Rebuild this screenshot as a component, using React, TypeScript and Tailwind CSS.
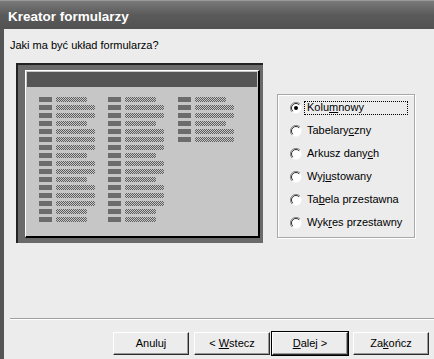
import React from "react";

const colRows = [0, 1, 1, 0, 1, 1, 1, 0, 1, 1, 0, 1, 1, 1, 0, 0];
const lastColRows = [0, 1, 1, 0, 1, 1];

const Field = ({ long }: { long: number }) => (
  <div className="flex gap-[4px] h-[5px] mb-[3px]">
    <div className="w-[13px] h-full bg-[#6c6c6c]" />
    <div
      className={`${long ? "w-[39px]" : "w-[31px]"} h-full bg-[repeating-conic-gradient(#5c5c5c_0%_25%,#c8c8c8_0%_50%)] bg-[length:2px_2px]`}
    />
  </div>
);

const Radio = ({ checked }: { checked?: boolean }) => (
  <svg width="12" height="12" viewBox="0 0 12 12" className="shrink-0">
    <circle cx="6" cy="6" r="5.5" fill="#ffffff" />
    <path d="M10 2 A5.5 5.5 0 0 0 2 10" fill="none" stroke="#8a8a8a" strokeWidth="1" />
    <path d="M9.2 2.8 A4.5 4.5 0 0 0 2.8 9.2" fill="none" stroke="#2a2a2a" strokeWidth="1" />
    {checked && <circle cx="6" cy="6" r="2" fill="#000" />}
  </svg>
);

const options: { pre: string; key: string; post: string }[] = [
  { pre: "Kolu", key: "m", post: "nowy" },
  { pre: "Tabelary", key: "c", post: "zny" },
  { pre: "Arkusz dany", key: "c", post: "h" },
  { pre: "Wyj", key: "u", post: "stowany" },
  { pre: "Ta", key: "b", post: "ela przestawna" },
  { pre: "Wyk", key: "r", post: "es przestawny" },
];

const Btn = ({ children, def }: { children: React.ReactNode; def?: boolean }) => (
  <div className={`${def ? "border border-black" : "border border-transparent"} w-[78px] h-[25px]`}>
    <div className="w-full h-full flex items-center justify-center bg-[#ececec] border-t border-l border-white border-b border-r border-b-[#2a2a2a] border-r-[#2a2a2a] shadow-[inset_-1px_-1px_#9a9a9a] text-[11px] text-black">
      {children}
    </div>
  </div>
);

export default function App() {
  return (
    <div className="w-[434px] h-[359px] overflow-hidden bg-[#ececec] flex flex-col font-['Liberation_Sans',Arial,sans-serif]">
      <div className="h-[29px] shrink-0 flex items-center pt-[4px] pl-[8px] bg-gradient-to-b from-[#7a7a7a] via-[#5a5a5a] to-[#525252] border-t border-[#9a9a9a]">
        <span className="text-white font-bold text-[13.5px]">Kreator formularzy</span>
      </div>
      <div className="flex-1 flex flex-col border-l-4 border-[#555555]">
        <div className="mt-[10px] ml-[6px] text-[11px] leading-[13px] text-black">Jaki ma być układ formularza?</div>
        <div className="flex mt-[11px]">
          {/* preview */}
          <div className="ml-[12px] w-[247px] h-[180px] bg-[#6a6a6a] border-t-2 border-l-2 border-[#222222] pl-[7px] pt-[5px] pr-[3px] pb-[5px] flex">
            <div className="flex-1 bg-[#c6c6c6] border-t border-l border-white border-b-2 border-r-2 border-b-black border-r-black flex flex-col">
              <div className="mx-[1px] mt-[1px] h-[15px] bg-[#555555]" />
              <div className="flex pl-[13px] pt-[10px]">
                <div className="w-[69px]">
                  {colRows.map((l, i) => (
                    <Field key={i} long={l} />
                  ))}
                </div>
                <div className="w-[70px]">
                  {colRows.map((l, i) => (
                    <Field key={i} long={l} />
                  ))}
                </div>
                <div>
                  {lastColRows.map((l, i) => (
                    <Field key={i} long={l} />
                  ))}
                </div>
              </div>
            </div>
          </div>
          {/* options */}
          <div className="ml-[14px] mt-[31px] w-[138px] h-[144px] border border-[#a8a8a8] shadow-[inset_1px_1px_#ffffff,1px_1px_#ffffff] pt-[1px] pl-[12px] flex flex-col">
            {options.map((o, i) => (
              <div key={i} className="h-[23px] flex items-center">
                <Radio checked={i === 0} />
                <span
                  className={`ml-[2px] w-[104px] h-[14px] px-[2px] flex items-center text-[11px] text-black whitespace-nowrap border ${i === 0 ? "border-dotted border-black" : "border-transparent"}`}
                >
                  {o.pre}
                  <span className="underline">{o.key}</span>
                  {o.post}
                </span>
              </div>
            ))}
          </div>
        </div>
        <div className="mt-[75px] ml-[6px] h-[2px] border-t border-[#a0a0a0] border-b border-b-white" />
        <div className="flex mt-[11px] ml-[108px]">
          <Btn>Anuluj</Btn>
          <div className="ml-[3px]">
            <Btn>
              &lt;&nbsp;<span className="underline">W</span>stecz
            </Btn>
          </div>
          <Btn def>
            <span className="underline">D</span>alej &gt;
          </Btn>
          <div className="ml-[3px]">
            <Btn>
              Za<span className="underline">k</span>ończ
            </Btn>
          </div>
        </div>
      </div>
    </div>
  );
}
